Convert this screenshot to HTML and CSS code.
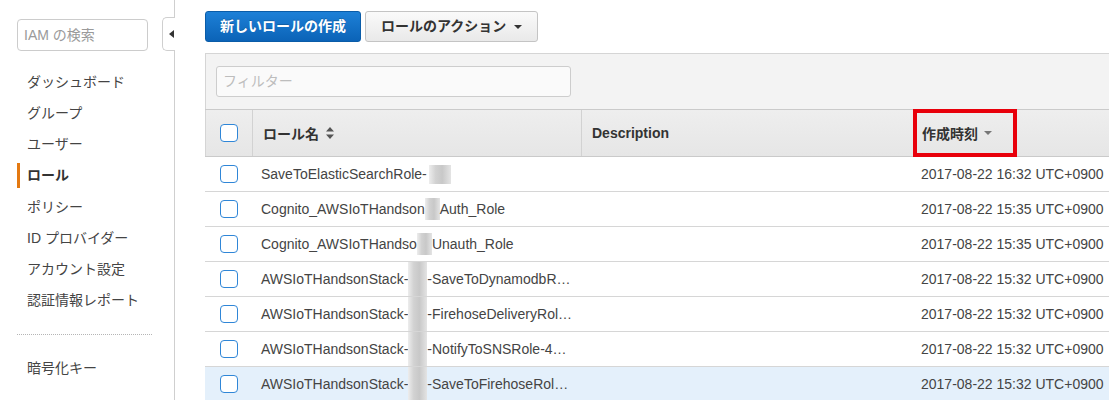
FILE: index.html
```html
<!DOCTYPE html>
<html lang="ja">
<head>
<meta charset="utf-8">
<title>IAM ロール</title>
<link rel="stylesheet" href="styles.css">
</head>
<body>
<div class="app">
  <aside class="sidebar">
    <div class="search">IAM の検索</div>
    <div class="collapse"><span class="tri-left"></span></div>
    <nav class="nav">
      <div class="nav-item">ダッシュボード</div>
      <div class="nav-item">グループ</div>
      <div class="nav-item">ユーザー</div>
      <div class="nav-item active">ロール</div>
      <div class="nav-item">ポリシー</div>
      <div class="nav-item">ID プロバイダー</div>
      <div class="nav-item">アカウント設定</div>
      <div class="nav-item">認証情報レポート</div>
      <div class="sep"></div>
      <div class="nav-item">暗号化キー</div>
    </nav>
  </aside>
  <main class="main">
    <div class="toolbar">
      <button class="btn btn-primary">新しいロールの作成</button>
      <button class="btn btn-default">ロールのアクション <span class="caret"></span></button>
    </div>
    <div class="panel">
      <div class="filter">フィルター</div>
    </div>
    <div class="grid">
      <div class="thead">
        <div class="th th-check"><span class="cb"></span></div>
        <div class="th th-line">ロール名 <svg class="sort" width="8" height="12" viewBox="0 0 8 12"><path d="M4 0 L8 4.5 L0 4.5 Z M0 7.5 L8 7.5 L4 12 Z" fill="#555"/></svg></div>
        <div class="th th-line">Description</div>
        <div class="th th-date">作成時刻 <span class="caret caret-light"></span><span class="highlight"></span></div>
      </div>
      <div class="row">
        <div class="td td-check"><span class="cb"></span></div>
        <div class="td">SaveToElasticSearchRole-<span class="blur blur-a"></span></div>
        <div class="td"></div>
        <div class="td">2017-08-22 16:32 UTC+0900</div>
      </div>
      <div class="row">
        <div class="td td-check"><span class="cb"></span></div>
        <div class="td">Cognito_AWSIoTHandson<span class="blur blur-b"></span>Auth_Role</div>
        <div class="td"></div>
        <div class="td">2017-08-22 15:35 UTC+0900</div>
      </div>
      <div class="row">
        <div class="td td-check"><span class="cb"></span></div>
        <div class="td">Cognito_AWSIoTHandso<span class="blur blur-b"></span>Unauth_Role</div>
        <div class="td"></div>
        <div class="td">2017-08-22 15:35 UTC+0900</div>
      </div>
      <div class="row">
        <div class="td td-check"><span class="cb"></span></div>
        <div class="td">AWSIoTHandsonStack-<span class="blur blur-c"></span>-SaveToDynamodbR…</div>
        <div class="td"></div>
        <div class="td">2017-08-22 15:32 UTC+0900</div>
      </div>
      <div class="row">
        <div class="td td-check"><span class="cb"></span></div>
        <div class="td">AWSIoTHandsonStack-<span class="blur blur-c"></span>-FirehoseDeliveryRol…</div>
        <div class="td"></div>
        <div class="td">2017-08-22 15:32 UTC+0900</div>
      </div>
      <div class="row">
        <div class="td td-check"><span class="cb"></span></div>
        <div class="td">AWSIoTHandsonStack-<span class="blur blur-c"></span>-NotifyToSNSRole-4…</div>
        <div class="td"></div>
        <div class="td">2017-08-22 15:32 UTC+0900</div>
      </div>
      <div class="row selected">
        <div class="td td-check"><span class="cb"></span></div>
        <div class="td">AWSIoTHandsonStack-<span class="blur blur-c"></span>-SaveToFirehoseRol…</div>
        <div class="td"></div>
        <div class="td">2017-08-22 15:32 UTC+0900</div>
      </div>
    </div>
  </main>
</div>
</body>
</html>
```
FILE: styles.css
```css
* { box-sizing: border-box; }
html, body { margin: 0; padding: 0; }
body {
  width: 1109px;
  height: 400px;
  overflow: hidden;
  background: #fff;
  color: #444;
  font-family: "Liberation Sans", Arial, "Noto Sans CJK JP", sans-serif;
  font-size: 14px;
}
.app { display: flex; height: 400px; }

/* Sidebar */
.sidebar {
  position: relative;
  flex: none;
  width: 175px;
  border-right: 1px solid #cfcfcf;
  padding: 19px 0 0 17px;
}
.search {
  width: 131px;
  height: 32px;
  border: 1px solid #ccc;
  border-radius: 4px;
  padding: 0 6px;
  line-height: 30px;
  color: #9a9a9a;
}
.collapse {
  position: absolute;
  left: 162px;
  top: 17px;
  width: 13px;
  height: 34px;
  border: 1px solid #cfcfcf;
  border-right: none;
  border-radius: 5px 0 0 5px;
  background: #fff;
  z-index: 2;
}
.tri-left {
  position: absolute;
  left: 6px;
  top: 12px;
  width: 0; height: 0;
  border-top: 4px solid transparent;
  border-bottom: 4px solid transparent;
  border-right: 5px solid #333;
}
.nav { margin-top: 16px; }
.nav-item {
  position: relative;
  height: 31.15px;
  line-height: 31px;
  padding-left: 10px;
  color: #444;
  white-space: nowrap;
}
.nav-item.active { font-weight: bold; color: #333; }
.nav-item.active::before {
  content: "";
  position: absolute;
  left: 0; top: 3px;
  width: 3px; height: 25px;
  background: #e47911;
}
.sep {
  width: 135px;
  border-top: 1px dotted #b5b5b5;
  margin: 18px 0 18px;
}

/* Main */
.main {
  flex: 1;
  min-width: 0;
  overflow: hidden;
  padding: 11px 0 0 30px;
}
.toolbar { display: flex; gap: 4px; }
.btn {
  height: 31px;
  border-radius: 3px;
  font-family: inherit;
  font-size: 14px;
  font-weight: bold;
  line-height: 29px;
  padding: 0 14px;
  cursor: pointer;
  display: flex;
  align-items: center;
}
.btn-primary {
  color: #fff;
  border: 1px solid #0a5ca8;
  background: linear-gradient(#1d80d7, #0b63b7);
  text-shadow: 0 -1px 0 rgba(0,0,0,0.2);
}
.btn-default {
  color: #333;
  border: 1px solid #c4c4c4;
  background: linear-gradient(#fafafa, #e9e9e9);
  padding: 0 15px;
  gap: 8px;
}
.caret {
  display: inline-block;
  width: 0; height: 0;
  border-left: 4px solid transparent;
  border-right: 4px solid transparent;
  border-top: 4px solid #333;
}
.caret-light { border-top-color: #777; margin-left: 6px; }

.panel {
  margin-top: 11px;
  width: 1000px;
  border: 1px solid #d5d5d5;
  border-bottom: none;
  background: #f3f3f3;
  padding: 12px 10px 12px;
}
.filter {
  width: 355px;
  height: 31px;
  border: 1px solid #cdcdcd;
  border-radius: 3px;
  background: #fafafa;
  padding: 0 6px;
  line-height: 29px;
  color: #bdbdbd;
}

.grid { width: 1000px; }
.thead, .row {
  display: grid;
  grid-template-columns: 47px 329px 331px 293px;
}
.thead {
  height: 48px;
  border-top: 1px solid #cacaca;
  border-bottom: 1px solid #cacaca;
  background: linear-gradient(#eeeeee, #e6e6e6);
  box-shadow: inset 1px 0 0 #d5d5d5;
}
.th {
  position: relative;
  display: flex;
  align-items: center;
  padding-left: 10px;
  font-weight: bold;
  color: #333;
  white-space: nowrap;
}
.th-check { justify-content: center; padding-left: 0; }
.th-line { border-left: 1px solid #d2d2d2; }
.sort { margin-left: 7px; }
.highlight {
  position: absolute;
  left: 1px;
  top: -1px;
  width: 104px;
  height: 48px;
  border: 4px solid #e8000b;
}
.row {
  height: 35px;
  border-bottom: 1px solid #d6d6d6;
}
.row.selected { background: #e4f0fb; }
.td {
  display: flex;
  align-items: center;
  padding-left: 9px;
  color: #444;
  white-space: nowrap;
  overflow: hidden;
}
.td-check { justify-content: center; padding-left: 0; }
.cb {
  display: inline-block;
  width: 18px;
  height: 18px;
  border: 1px solid #2f86d7;
  border-radius: 4px;
  background: #fff;
}
.blur {
  display: inline-block;
  flex: none;
  background: linear-gradient(90deg, #ededed 0%, #d2d2d2 30%, #c8c8c8 60%, #e4e4e4 100%);
}
.blur-a { width: 22px; height: 19px; margin-left: 2px; }
.blur-b { width: 15px; height: 22px; }
.blur-c { width: 19px; height: 34px; }
```
